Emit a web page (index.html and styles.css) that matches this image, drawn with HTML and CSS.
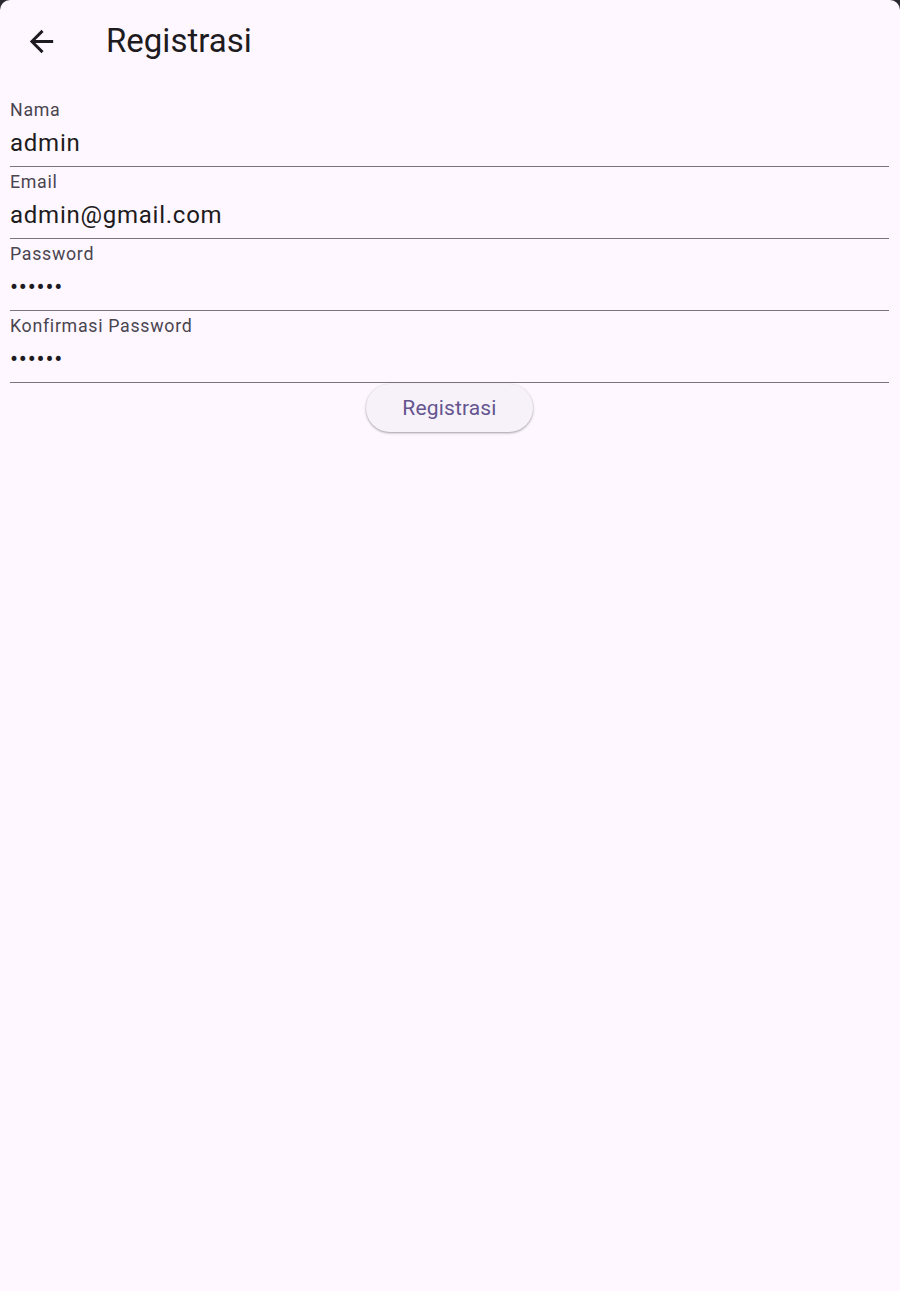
FILE: index.html
```html
<!DOCTYPE html>
<html lang="id">
<head>
<meta charset="utf-8">
<title>Registrasi</title>
<link rel="stylesheet" href="styles.css">
</head>
<body>
<div class="app">
  <header class="appbar">
    <div class="leading">
      <svg class="back" viewBox="0 0 24 24" width="35" height="35" aria-hidden="true">
        <path d="M20 11H7.83l5.59-5.59L12 4l-8 8 8 8 1.41-1.41L7.83 13H20v-2z" fill="#1d1b20"/>
      </svg>
    </div>
    <h1 class="title">Registrasi</h1>
  </header>
  <main class="form">
    <div class="field">
      <span class="label">Nama</span>
      <span class="value">admin</span>
    </div>
    <div class="field">
      <span class="label">Email</span>
      <span class="value">admin@gmail.com</span>
    </div>
    <div class="field">
      <span class="label">Password</span>
      <span class="value">••••••</span>
    </div>
    <div class="field">
      <span class="label">Konfirmasi Password</span>
      <span class="value">••••••</span>
    </div>
    <div class="actions">
      <button class="btn" type="button">Registrasi</button>
    </div>
  </main>
</div>
</body>
</html>
```

FILE: styles.css
```css
html, body {
  margin: 0;
  padding: 0;
  height: 100%;
  background: #2b2930;
}
body {
  font-family: Roboto, "Noto Sans", sans-serif;
}
.app {
  height: 1291px;
  background: #fef7ff;
  border-radius: 10px 10px 0 0;
  overflow: hidden;
  display: flex;
  flex-direction: column;
}
.appbar {
  height: 82px;
  display: flex;
  align-items: center;
  flex-shrink: 0;
}
.leading {
  width: 82px;
  height: 82px;
  display: flex;
  align-items: center;
  justify-content: center;
}
.back {
  display: block;
}
.title {
  margin: 0 0 0 24px;
  font-size: 33px;
  font-weight: 400;
  color: #1d1b20;
  line-height: 40px;
}
.form {
  padding: 13px 11px 0 10px;
  display: flex;
  flex-direction: column;
}
.field {
  height: 72px;
  box-sizing: border-box;
  padding-top: 5px;
  border-bottom: 1px solid #79747e;
  display: flex;
  flex-direction: column;
}
.label {
  font-size: 17.8px;
  line-height: 20px;
  letter-spacing: 0.7px;
  color: #49454f;
  height: 20px;
}
.value {
  margin-top: 9px;
  font-size: 24px;
  line-height: 28px;
  height: 28px;
  letter-spacing: 0.75px;
  color: #1d1b20;
}
.actions {
  display: flex;
  justify-content: center;
  padding-top: 1px;
}
.btn {
  height: 48px;
  padding: 0 36px;
  border: none;
  border-radius: 24px;
  background: #f7f2fa;
  color: #65558f;
  font-family: Roboto, "Noto Sans", sans-serif;
  font-size: 21px;
  font-weight: 400;
  letter-spacing: 0.15px;
  box-shadow: 0 1px 3px rgba(0,0,0,0.22), 0 1px 2px rgba(0,0,0,0.18);
}
```
